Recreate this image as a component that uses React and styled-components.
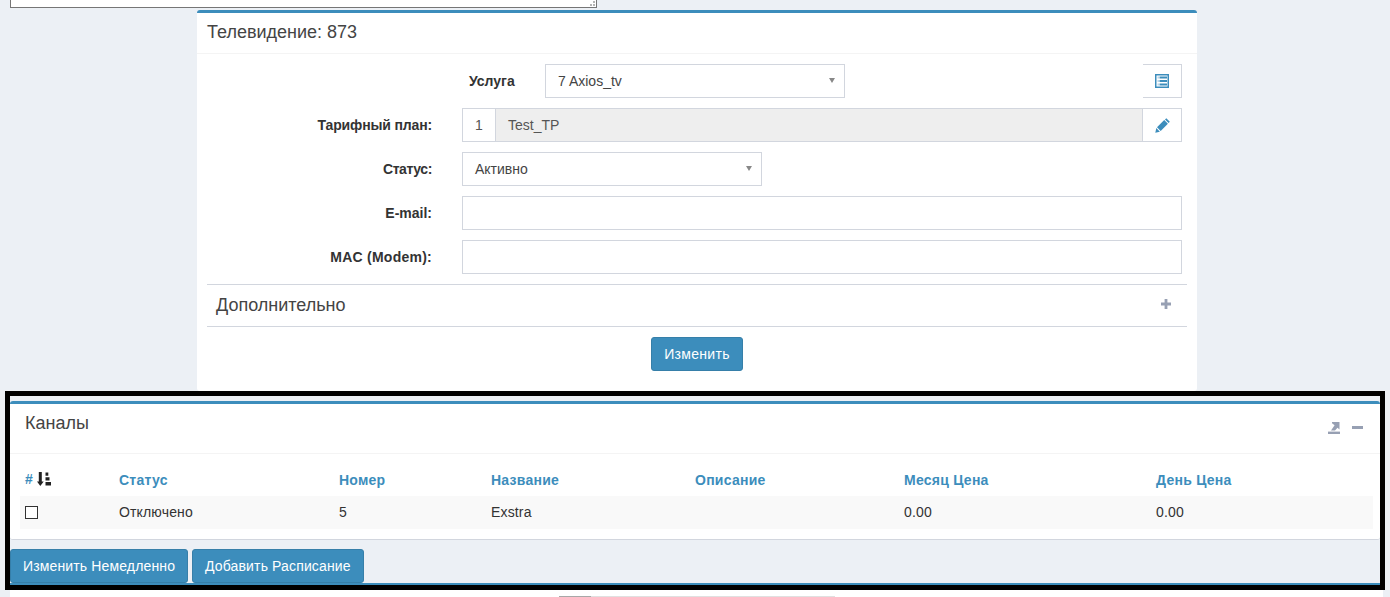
import React from 'react';
import styled, { createGlobalStyle } from 'styled-components';

const GlobalStyle = createGlobalStyle`
  html, body {
    margin: 0;
    padding: 0;
    background: #ecf0f5;
    overflow: hidden;
  }
  body {
    font-family: 'Liberation Sans', Arial, sans-serif;
    font-size: 14px;
    color: #333;
  }
  * {
    box-sizing: border-box;
  }
`;

const Page = styled.div`
  width: 1390px;
  height: 597px;
  overflow: hidden;
`;

const TextareaEdge = styled.div`
  position: relative;
  width: 587px;
  height: 8px;
  margin-left: 10px;
  background: #fff;
  border: 1px solid #767676;
  border-top: 0;
`;

const ResizeGrip = styled.svg`
  position: absolute;
  right: 1px;
  bottom: 0;
  width: 9px;
  height: 6px;
`;

const Panel = styled.section`
  width: 1000px;
  height: 381px;
  margin: 2px 0 0 197px;
  background: #fff;
  border-top: 3px solid #3c8dbc;
  border-radius: 3px;
`;

const PanelHeader = styled.header`
  height: 41px;
  padding: 10px 10px 0;
  border-bottom: 1px solid #f4f4f4;
  font-size: 18px;
  line-height: 18px;
  color: #444;
`;

const PanelBody = styled.div`
  padding: 10px 10px 0;
`;

const Rows = styled.div`
  display: flex;
  flex-direction: column;
  gap: 10px;
  width: 975px;
`;

const Row = styled.div`
  display: flex;
  align-items: center;
  height: 34px;
  padding-left: ${(p) => p.$indent || 0}px;
`;

const Label = styled.label`
  flex: none;
  width: ${(p) => p.$width}px;
  padding-right: ${(p) => p.$pad || 0}px;
  text-align: ${(p) => p.$align || 'right'};
  font-weight: 700;
  letter-spacing: ${(p) => p.$spacing || 0}px;
  color: #333;
`;

const Select = styled.div`
  position: relative;
  flex: none;
  display: flex;
  align-items: center;
  width: 300px;
  height: 34px;
  padding-left: 12px;
  background: #fff;
  border: 1px solid #d2d6de;
  color: #444;
`;

const Caret = styled.span`
  position: absolute;
  right: 9px;
  top: 13px;
  border-style: solid;
  border-width: 5px 3.5px 0;
  border-color: #888 transparent transparent;
`;

const Input = styled.div`
  flex: 1;
  height: 34px;
  background: #fff;
  border: 1px solid #d2d6de;
`;

const SideButton = styled.div`
  flex: none;
  margin-left: auto;
  display: flex;
  align-items: center;
  justify-content: center;
  width: 39px;
  height: 34px;
  background: #fff;
  border: 1px solid #d2d6de;
  border-left: 0;
`;

const Group = styled.div`
  flex: 1;
  display: flex;
  height: 34px;
  border: 1px solid #d2d6de;
`;

const GroupId = styled.div`
  flex: none;
  width: 32px;
  line-height: 32px;
  text-align: center;
  color: #555;
`;

const GroupValue = styled.div`
  flex: 1;
  padding-left: 12px;
  line-height: 32px;
  background: #eee;
  border-left: 1px solid #d2d6de;
  border-right: 1px solid #d2d6de;
  color: #555;
`;

const GroupButton = styled.div`
  flex: none;
  display: flex;
  align-items: center;
  justify-content: center;
  width: 38px;
`;

const Collapse = styled.div`
  display: flex;
  align-items: center;
  justify-content: space-between;
  width: 980px;
  height: 43px;
  margin-top: 10px;
  padding: 0 16px 0 9px;
  border-top: 1px solid #d2d6de;
  border-bottom: 1px solid #d2d6de;
  font-size: 18px;
  color: #444;
  & > svg {
    margin-bottom: 3px;
  }
`;

const Submit = styled.div`
  width: 980px;
  margin-top: 10px;
  text-align: center;
`;

const Button = styled.button`
  height: 34px;
  padding: 0 12px;
  background: #3c8dbc;
  border: 1px solid #367fa9;
  border-radius: 3px;
  font-family: inherit;
  font-size: 14px;
  letter-spacing: ${(p) => p.$spacing || 0}px;
  color: #fff;
`;

const Frame = styled.div`
  width: 1380px;
  height: 199px;
  margin-left: 5px;
  padding-top: 5px;
  background: #ecf0f5;
  border: 5px solid #000;
`;

const Card = styled.section`
  height: 139px;
  background: #fff;
  border-top: 3px solid #3c8dbc;
  border-bottom: 1px solid #d2d6de;
  border-radius: 3px;
`;

const CardHeader = styled.header`
  display: flex;
  justify-content: space-between;
  height: 50px;
  padding: 10px 17px 0 15px;
  border-bottom: 1px solid #f4f4f4;
  font-size: 18px;
  line-height: 18px;
  color: #444;
`;

const CardTools = styled.div`
  display: flex;
  align-items: center;
  gap: 12px;
  height: 25px;
  margin-top: 1px;
`;

const Table = styled.div`
  width: 1353px;
  margin-left: 10px;
`;

const Cells = styled.div`
  display: grid;
  grid-template-columns: 94px 220px 152px 204px 209px 252px 222px;
  align-items: center;
  height: ${(p) => p.$height}px;
  background: ${(p) => p.$bg || 'transparent'};
  & > * {
    padding-left: 5px;
  }
`;

const HeadCell = styled.div`
  display: flex;
  align-items: center;
  gap: 4px;
  padding-top: ${(p) => p.$top || 10}px;
  font-weight: 700;
  letter-spacing: 0.25px;
  color: #3c8dbc;
`;

const Cell = styled.div`
  padding-bottom: 2px;
  letter-spacing: 0.15px;
  color: #333;
`;

const CheckCell = styled.div``;

const Checkbox = styled.span`
  display: block;
  width: 13px;
  height: 13px;
  background: #fff;
  border: 1px solid #333;
`;

const Actions = styled.div`
  display: flex;
  gap: 4px;
  height: 36px;
  margin-top: 9px;
  border-bottom: 2px solid #3c8dbc;
`;

const BottomStrip = styled.div`
  width: 1373px;
  height: 8px;
  margin-left: 10px;
  padding: 6px 0 0 549px;
  background: #fff;
`;

const ScrollTrack = styled.div`
  width: 276px;
  height: 2px;
  background: #e0e0e0;
`;

const ScrollThumb = styled.div`
  width: 32px;
  height: 2px;
  background: #a8a8a8;
`;

const ListIcon = () => (
  <svg width="14" height="14" viewBox="0 0 14 14">
    <rect x="0" y="0" width="14" height="14" fill="#3c8dbc" />
    <rect x="1.5" y="1.5" width="11" height="11" fill="#fff" />
    <path d="M2.5 2.5h1.5v2h-1.5zM2.5 6h1.5v2h-1.5zM2.5 9.5h1.5v2h-1.5z" fill="#b9d6e8" />
    <path d="M4.5 2.5h7.5v2H4.5zM4.5 6h7.5v2H4.5zM4.5 9.5h7.5v2H4.5z" fill="#3c8dbc" />
  </svg>
);

const PencilIcon = () => (
  <svg width="15" height="15" viewBox="0 0 15 15">
    <path d="M0.3 14.7l1-4.6 3.6 3.6zM2 9.3l7.2-7.2 3.7 3.7-7.2 7.2zM10 1.4l1.3-1.2 3.5 3.5-1.2 1.3z" fill="#3c8dbc" />
  </svg>
);

const SortIcon = () => (
  <svg width="14" height="14" viewBox="0 0 14 14">
    <path d="M1.8 0h3v9.5h1.9L3.3 14 0 9.5h1.8z" fill="#222" />
    <path d="M8.5 0.5h2.8v3.2H8.5zM8.5 5.2h4v3.2h-4zM8.5 10h5.5v3.4H8.5z" fill="#222" />
  </svg>
);

const ExportIcon = () => (
  <svg width="12" height="12" viewBox="0 0 12 12">
    <path d="M0 9.6h12V12H0z" fill="#97a0b3" />
    <path d="M4 0h7.5v7.5L9.5 5.8 7 8.6H3L6.6 3.2 4 1.2z" fill="#97a0b3" />
  </svg>
);

const MinusIcon = () => (
  <svg width="11" height="3" viewBox="0 0 11 3">
    <path d="M0 0h11v3H0z" fill="#97a0b3" />
  </svg>
);

const PlusIcon = () => (
  <svg width="10" height="10" viewBox="0 0 10 10">
    <path d="M3.6 0h2.8v3.6H10v2.8H6.4V10H3.6V6.4H0V3.6h3.6z" fill="#97a0b3" />
  </svg>
);

const GripIcon = () => (
  <ResizeGrip viewBox="0 0 9 6">
    <path d="M7 0h2v2H7zM4 3h2v2H4zM7 3h2v2H7z" fill="#b5b5b5" />
  </ResizeGrip>
);

const columns = ['Статус', 'Номер', 'Название', 'Описание', 'Месяц Цена', 'День Цена'];
const channel = ['Отключено', '5', 'Exstra', '', '0.00', '0.00'];

const App = () => (
  <Page>
    <GlobalStyle />
    <TextareaEdge>
      <GripIcon />
    </TextareaEdge>

    <Panel>
      <PanelHeader>Телевидение: 873</PanelHeader>
      <PanelBody>
        <Rows>
          <Row $indent={262}>
            <Label $width={76} $align="left">Услуга</Label>
            <Select>
              7 Axios_tv
              <Caret />
            </Select>
            <SideButton>
              <ListIcon />
            </SideButton>
          </Row>
          <Row>
            <Label $width={255} $pad={30} $spacing={-0.15}>Тарифный план:</Label>
            <Group>
              <GroupId>1</GroupId>
              <GroupValue>Test_TP</GroupValue>
              <GroupButton>
                <PencilIcon />
              </GroupButton>
            </Group>
          </Row>
          <Row>
            <Label $width={255} $pad={30} $spacing={-0.4}>Статус:</Label>
            <Select>
              Активно
              <Caret />
            </Select>
          </Row>
          <Row>
            <Label $width={255} $pad={30}>E-mail:</Label>
            <Input />
          </Row>
          <Row>
            <Label $width={255} $pad={30} $spacing={0.25}>MAC (Modem):</Label>
            <Input />
          </Row>
        </Rows>
        <Collapse>
          Дополнительно
          <PlusIcon />
        </Collapse>
        <Submit>
          <Button $spacing={0.3}>Изменить</Button>
        </Submit>
      </PanelBody>
    </Panel>

    <Frame>
      <Card>
        <CardHeader>
          Каналы
          <CardTools>
            <ExportIcon />
            <MinusIcon />
          </CardTools>
        </CardHeader>
        <Table>
          <Cells $height={42}>
            <HeadCell $top={8}>
              # <SortIcon />
            </HeadCell>
            {columns.map((name) => (
              <HeadCell key={name}>{name}</HeadCell>
            ))}
          </Cells>
          <Cells $height={33} $bg="#f9f9f9">
            <CheckCell>
              <Checkbox />
            </CheckCell>
            {channel.map((value, i) => (
              <Cell key={i}>{value}</Cell>
            ))}
          </Cells>
        </Table>
      </Card>
      <Actions>
        <Button $spacing={0.14}>Изменить Немедленно</Button>
        <Button $spacing={0.14}>Добавить Расписание</Button>
      </Actions>
    </Frame>

    <BottomStrip>
      <ScrollTrack>
        <ScrollThumb />
      </ScrollTrack>
    </BottomStrip>
  </Page>
);

export default App;
